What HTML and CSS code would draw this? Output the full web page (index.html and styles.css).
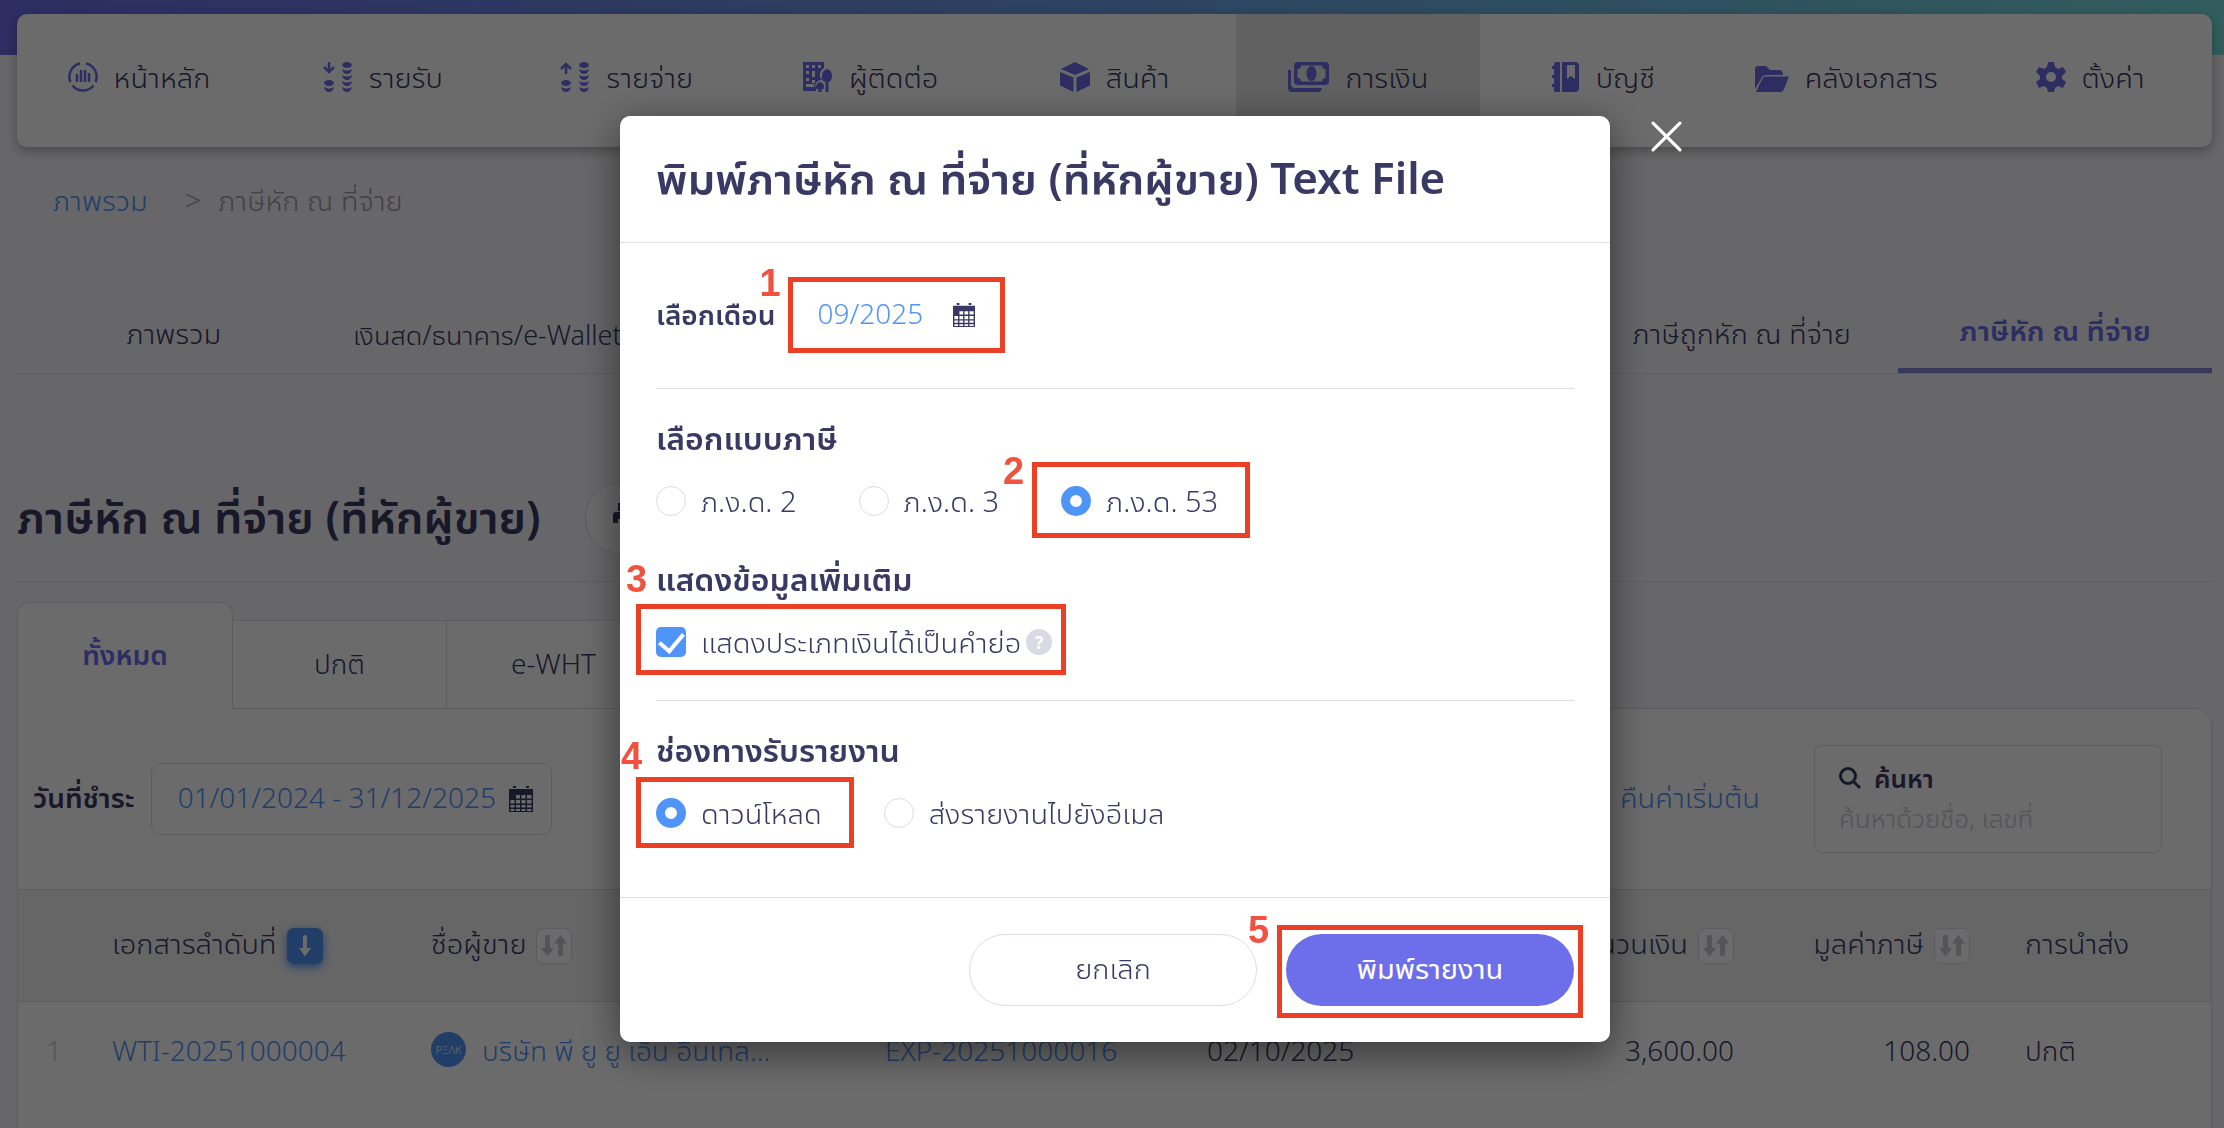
FILE: index.html
```html
<!DOCTYPE html>
<html lang="th">
<head>
  <meta charset="UTF-8">
  <meta name="viewport" content="width=device-width, initial-scale=1.0">
  <title>ภาษีหัก ณ ที่จ่าย</title>
  <link rel="stylesheet" href="styles.css">
</head>
<body>
  <svg class="defs" aria-hidden="true">
    <symbol id="calendar" viewBox="0 0 24 26">
      <path fill="currentColor" fill-rule="evenodd" d="M0 3h24v23H0zM1.500 14h4v3.500h-4zM1.500 19h4v2.500h-4zM1.500 23h4v2h-4zM7 9h4v3.500H7zM7 14h4v3.500H7zM7 19h4v2.500H7zM7 23h4v2H7zM12.500 9h4v3.500h-4zM12.500 14h4v3.500h-4zM12.500 19h4v2.500h-4zM12.500 23h4v2h-4zM18 9h4.500v3.500H18zM18 14h4.500v3.500H18zM18 19h4.500v2.500H18zM18 23h4.500v2H18z"/>
      <path fill="currentColor" d="M4 0h3v2H4zM17 0h3v2h-3z"/>
    </symbol>
    <symbol id="sort" viewBox="0 0 28 24">
      <path fill="currentColor" d="M5 2q0-1 2.500-1T10 2v12h4L7.500 22.500 1 14h4zM20.500 1l6.500 8.500h-4V21q0 1-2.500 1T18 21V9.500h-4z"/>
    </symbol>
    <symbol id="coins" viewBox="0 0 30 30">
      <path fill="currentColor" d="M19 3q1-3 5-3t5 3q-1 3-5 3t-5-3zM19 7q5 3 10 0-1 5-5 5t-5-5zM19 13q5 3 10 0-1 5-5 5t-5-5zM19 19q5 3 10 0-1 5-5 5t-5-5zM19 25q5 3 10 0-1 5-5 5t-5-5zM1 21q1-3 5-3t5 3q-1 3-5 3t-5-3zM1 25q5 3 10 0-1 5-5 5t-5-5z"/>
    </symbol>
  </svg>

  <header class="top-bar"></header>
  <div class="page">
    <nav class="main-nav">
      <a href="#" class="nav-item">
        <svg class="nav-icon" viewBox="0 0 30 30" fill="none" stroke="currentColor" stroke-width="2.500"><path d="M12 1.500A13.500 13.500 0 0 0 2.500 20M18 1.500A13.500 13.500 0 0 1 27.500 20M4.500 23.500a13.500 13.500 0 0 0 21 0M9 12v8M13 8v12M17 8v12M21 11v9"/></svg>
        <span>หน้าหลัก</span>
      </a>
      <a href="#" class="nav-item">
        <svg class="nav-icon" viewBox="0 0 30 30"><use href="#coins"/><path fill="none" stroke="currentColor" stroke-width="2.500" d="M6 0v9M1 5l5 5 5-5"/></svg>
        <span>รายรับ</span>
      </a>
      <a href="#" class="nav-item">
        <svg class="nav-icon" viewBox="0 0 30 30"><use href="#coins"/><path fill="none" stroke="currentColor" stroke-width="2.500" d="M6 12V2M1 7l5-5 5 5"/></svg>
        <span>รายจ่าย</span>
      </a>
      <a href="#" class="nav-item">
        <svg class="nav-icon" viewBox="0 0 30 30" fill="currentColor"><path fill-rule="evenodd" d="M0 0h21v6q-5 3-4 9l2 3q-5 0-7 5l1 3v3H0zM3 3v3h3V3zM9 3v3h3V3zM15 3v3h3V3zM3 9v3h3V9zM9 9v6h3V9zM3 16v3h3v-3zM9 18v3h3v-3zM3 22v3h8v-3z"/><path d="M24 7q5 1 5 7 0 5-3.500 6v10h-3V20Q18 19 19 13q1-5 5-6zM17 20q4 1 4 5 0 2-2.500 2.500V30h-3v-2.500Q12 27 13 24q1-3 4-4z"/></svg>
        <span>ผู้ติดต่อ</span>
      </a>
      <a href="#" class="nav-item">
        <svg class="nav-icon" viewBox="0 0 30 30" fill="currentColor"><path d="M15 0l14 7-14 6L1 7zM0 10l13.500 5.500V30L0 23.500zM30 10l-13.500 5.500V30L30 23.500z"/></svg>
        <span>สินค้า</span>
      </a>
      <a href="#" class="nav-item active">
        <svg class="nav-icon wide" viewBox="0 0 41 30" fill="currentColor"><path fill-rule="evenodd" d="M10 0h27q4 0 4 4v15q0 4-4 4H10q-4 0-4-4V4q0-4 4-4zM13 3.500Q13 7 9.500 7v9q3.500 0 3.500 3.500h21q0-3.500 3.500-3.500V7Q34 7 34 3.500z"/><ellipse cx="23.500" cy="11.500" rx="5" ry="7.500"/><path d="M0 8q3-1 3 1v13q0 4 4 4h27q-1 4-4 4H4q-4 0-4-4z"/></svg>
        <span>การเงิน</span>
      </a>
      <a href="#" class="nav-item">
        <svg class="nav-icon" viewBox="0 0 28 30" fill="currentColor"><path d="M3 2q0-2 3-2h3v30H6q-3 0-3-2v-3H1v-3h2v-6H1v-3h2V7H1V4h2z"/><path fill-rule="evenodd" d="M11 0h13q4 0 4 4v22q0 4-4 4H11zM16 3v14l4-3 4 3V3z"/></svg>
        <span>บัญชี</span>
      </a>
      <a href="#" class="nav-item">
        <svg class="nav-icon wide-folder" viewBox="0 0 34 30" fill="currentColor"><path d="M3 4h8l4 4h9q4 0 4 5H12q-5 0-6 4L0 27V7q0-3 3-3z"/><path d="M10 14.500h24L29 27q-1 3-4 3H1l6-13q1-2.500 3-2.500z"/></svg>
        <span>คลังเอกสาร</span>
      </a>
      <a href="#" class="nav-item">
        <svg class="nav-icon" viewBox="0 0 30 30" fill="currentColor"><path fill-rule="evenodd" d="M12 0h6l1 5 3 2 5-2 3 5-4 4v3l4 3-3 6-5-2-3 2-1 4h-6l-1-4-3-2-5 2-3-6 4-3v-3l-4-4 3-5 5 2 3-2zM15 10a5 5 0 1 0 0 10 5 5 0 0 0 0-10z"/></svg>
        <span>ตั้งค่า</span>
      </a>
    </nav>

    <div class="breadcrumb">
      <a href="#">ภาพรวม</a>
      <span class="separator">&gt;</span>
      <span>ภาษีหัก ณ ที่จ่าย</span>
    </div>

    <nav class="tabs">
      <a href="#" class="tab">ภาพรวม</a>
      <a href="#" class="tab tab-long">เงินสด/ธนาคาร/e-Wallet</a>
      <a href="#" class="tab tab-received">ภาษีถูกหัก ณ ที่จ่าย</a>
      <a href="#" class="tab active">ภาษีหัก ณ ที่จ่าย</a>
    </nav>

    <div class="title-row">
      <h1>ภาษีหัก ณ ที่จ่าย (ที่หักผู้ขาย)</h1>
      <button class="print-btn" aria-label="พิมพ์">
        <svg viewBox="0 0 28 26" fill="currentColor"><path d="M5 0h18v8H20V3H8v5H5zM3 9h22q3 0 3 3v8h-5v-4H5v4H0v-8q0-3 3-3zM7 18h14v8H7z"/></svg>
      </button>
    </div>

    <div class="sub-tabs">
      <button class="sub-tab active">ทั้งหมด</button>
      <button class="sub-tab">ปกติ</button>
      <button class="sub-tab">e-WHT</button>
    </div>

    <section class="panel">
      <div class="filters">
        <label for="paid-date">วันที่ชำระ</label>
        <div class="date-box">
          <input id="paid-date" type="text" value="01/01/2024 - 31/12/2025">
          <svg class="calendar"><use href="#calendar"/></svg>
        </div>
        <a href="#" class="reset">คืนค่าเริ่มต้น</a>
        <div class="search-box">
          <label for="search">
            <svg viewBox="0 0 22 22" fill="none" stroke="currentColor" stroke-width="3"><circle cx="9" cy="9" r="7.500"/><path d="M14 14l7 7"/></svg>
            ค้นหา
          </label>
          <input id="search" type="text" placeholder="ค้นหาด้วยชื่อ, เลขที่">
        </div>
      </div>

      <table>
        <colgroup>
          <col class="col-no"><col class="col-doc"><col class="col-vendor"><col class="col-ref"><col class="col-date"><col class="col-amount"><col class="col-tax"><col class="col-status">
        </colgroup>
        <thead>
          <tr>
            <th></th>
            <th><span class="th"><span>เอกสารลำดับที่</span> <button class="sort on" aria-label="เรียงลำดับ"><svg viewBox="0 0 14 24"><path fill="currentColor" d="M7 1q2 0 2 2v11h4L7 22.500 1 14h4V3q0-2 2-2z"/></svg></button></span></th>
            <th><span class="th"><span>ชื่อผู้ขาย</span> <button class="sort" aria-label="เรียงลำดับ"><svg><use href="#sort"/></svg></button></span></th>
            <th></th>
            <th></th>
            <th class="num"><span class="th"><span>จำนวนเงิน</span> <button class="sort" aria-label="เรียงลำดับ"><svg><use href="#sort"/></svg></button></span></th>
            <th class="num"><span class="th"><span>มูลค่าภาษี</span> <button class="sort" aria-label="เรียงลำดับ"><svg><use href="#sort"/></svg></button></span></th>
            <th class="status"><span class="th"><span>การนำส่ง</span></span></th>
          </tr>
        </thead>
        <tbody>
          <tr>
            <td class="row-no">1</td>
            <td><a href="#">WTI-20251000004</a></td>
            <td><a href="#" class="vendor"><span class="logo">PΞΛK</span>บริษัท พี ยู ยู เอ็น อินเทล...</a></td>
            <td><a href="#">EXP-20251000016</a></td>
            <td>02/10/2025</td>
            <td class="num">3,600.00</td>
            <td class="num">108.00</td>
            <td class="status">ปกติ</td>
          </tr>
        </tbody>
      </table>
    </section>
  </div>

  <div class="overlay">
    <div class="modal" role="dialog" aria-labelledby="modal-title">
      <button class="close" aria-label="ปิด">
        <svg viewBox="0 0 30 30" fill="none" stroke="currentColor" stroke-width="3" stroke-linecap="round"><path d="M2 2l26 26M28 2L2 28"/></svg>
      </button>
      <div class="modal-header">
        <h2 id="modal-title">พิมพ์ภาษีหัก ณ ที่จ่าย (ที่หักผู้ขาย) Text File</h2>
      </div>

      <div class="modal-body">
        <div class="month-row">
          <label for="month">เลือกเดือน</label>
          <div class="month-box">
            <input id="month" type="text" value="09/2025">
            <svg class="calendar small"><use href="#calendar"/></svg>
            <span class="mark mark-month"></span>
            <b class="step step-1">1</b>
          </div>
        </div>

        <fieldset>
          <legend>เลือกแบบภาษี</legend>
          <div class="options">
            <label class="option"><input type="radio" name="form"><span>ภ.ง.ด. 2</span></label>
            <label class="option"><input type="radio" name="form"><span>ภ.ง.ด. 3</span></label>
            <label class="option"><input type="radio" name="form" checked><span>ภ.ง.ด. 53</span><i class="mark mark-form"></i><b class="step step-2">2</b></label>
          </div>
        </fieldset>

        <fieldset class="extra">
          <legend>แสดงข้อมูลเพิ่มเติม</legend>
          <div class="options">
            <label class="option"><input type="checkbox" checked><span>แสดงประเภทเงินได้เป็นคำย่อ</span><span class="help">?</span><i class="mark mark-extra"></i><b class="step step-3">3</b></label>
          </div>
        </fieldset>

        <fieldset>
          <legend>ช่องทางรับรายงาน</legend>
          <div class="options">
            <label class="option"><input type="radio" name="channel" checked><span>ดาวน์โหลด</span><i class="mark mark-channel"></i><b class="step step-4">4</b></label>
            <label class="option"><input type="radio" name="channel"><span>ส่งรายงานไปยังอีเมล</span></label>
          </div>
        </fieldset>
      </div>

      <div class="modal-footer">
        <button class="btn">ยกเลิก</button>
        <div class="submit">
          <button class="btn primary">พิมพ์รายงาน</button>
          <span class="mark mark-submit"></span>
          <b class="step step-5">5</b>
        </div>
      </div>
    </div>
  </div>
</body>
</html>
```
FILE: styles.css
```css
* {
  box-sizing: border-box;
}

body {
  display: flex;
  flex-direction: column;
  margin: 0;
  min-height: 100vh;
  background-color: #f5f5f9;
  color: #3a3963;
  font-family: 'Noto Sans', 'Noto Sans Thai UI', 'Noto Sans Thai', sans-serif;
  font-size: 28px;
  font-weight: 350;
  line-height: 40px;
}

a {
  color: #4f94f8;
  text-decoration: none;
}

button,
input {
  font: inherit;
  color: inherit;
}

button {
  padding: 0;
  cursor: pointer;
}

input[type="text"] {
  min-width: 0;
  padding: 0 0 4px;
  border: 0;
  outline: 0;
  background: none;
}

.defs {
  position: absolute;
  width: 0;
  height: 0;
}

.top-bar {
  height: 55px;
  background: linear-gradient(90deg, #6b6de8, #6ba0e8 50%, #76dede);
}

.page {
  flex: 1;
  display: flex;
  flex-direction: column;
  margin: -41px 12px 0 17px;
}

/* main menu */
.main-nav {
  display: grid;
  grid-template-columns: repeat(9, 1fr);
  height: 133px;
  overflow: hidden;
  border-radius: 10px;
  background-color: #fff;
  box-shadow: 0 4px 12px rgba(0, 0, 0, 0.3);
  font-size: 29px;
}

.nav-item {
  display: flex;
  justify-content: center;
  gap: 16px;
  padding-top: 43px;
  color: #3a3963;
  white-space: nowrap;
}

.nav-item.active {
  background-color: #e6e6e6;
}

.nav-icon {
  width: 30px;
  height: 30px;
  margin-top: 5px;
  color: #6b6de8;
}

.nav-icon.wide {
  width: 41px;
}

.nav-icon.wide-folder {
  width: 34px;
}

.breadcrumb {
  display: flex;
  gap: 17px;
  margin-top: 33px;
  padding-left: 36px;
  color: #9e9ea8;
  font-size: 29px;
}

.separator {
  margin-left: 20px;
}

.tabs {
  display: grid;
  grid-template-columns: repeat(7, 1fr);
  height: 84px;
  margin-top: 70px;
  border-bottom: 1px solid #dcdce4;
  font-size: 29px;
}

.tab {
  padding-top: 23px;
  color: #3a3963;
  text-align: center;
  white-space: nowrap;
}

.tab-long {
  font-size: 27px;
  line-height: 44px;
}

.tab-received {
  grid-column: 6;
}

.tab.active {
  padding-top: 20px;
  border-bottom: 5px solid #8585dc;
  color: #6b6de8;
  font-weight: 600;
}

.title-row {
  display: flex;
  align-items: center;
  gap: 44px;
  height: 208px;
  padding-top: 80px;
  border-bottom: 1px solid #dcdce4;
}

h1,
h2 {
  margin: 0;
  padding-bottom: 4px;
  font-size: 44px;
  font-weight: 600;
  line-height: 60px;
  white-space: nowrap;
}

h1 {
  font-size: 45px;
}

.print-btn {
  width: 84px;
  height: 72px;
  border: 1px solid #dcdce4;
  border-radius: 36px;
  background-color: #fff;
}

.print-btn svg {
  width: 28px;
  height: 26px;
}

.sub-tabs {
  display: flex;
  align-items: flex-end;
  margin-top: 20px;
}

.sub-tab {
  width: 214px;
  height: 88px;
  padding-bottom: 4px;
  border: 1px solid #dcdce4;
  border-width: 1px 1px 0 0;
  background-color: #fff;
}

.sub-tab.active {
  position: relative;
  width: 216px;
  height: 107px;
  margin-bottom: -1px;
  border-width: 1px 1px 0;
  border-radius: 12px 12px 0 0;
  color: #6b6de8;
  font-weight: 600;
}

/* list of documents */
.panel {
  flex: 1;
  border: 1px solid #dcdce4;
  border-bottom: 0;
  border-top-right-radius: 16px;
  background-color: #fff;
}

.filters {
  display: flex;
  align-items: center;
  height: 180px;
  padding: 0 49px 0 15px;
}

.filters label {
  padding-bottom: 4px;
  font-weight: 600;
  white-space: nowrap;
}

.date-box {
  display: flex;
  align-items: center;
  width: 401px;
  height: 72px;
  margin-left: 16px;
  padding: 0 18px 0 26px;
  border: 1px solid #dcdce4;
  border-radius: 10px;
  color: #4f94f8;
}

.date-box input {
  flex: 1;
}

.calendar {
  width: 24px;
  height: 26px;
  color: #3a3963;
}

.calendar.small {
  width: 22px;
  height: 24px;
}

.reset {
  margin-left: auto;
  padding-bottom: 4px;
  font-size: 29px;
  white-space: nowrap;
}

.search-box {
  width: 348px;
  height: 108px;
  margin-left: 54px;
  padding: 12px 24px;
  border: 1px solid #dcdce4;
  border-radius: 8px;
  font-size: 26px;
}

.search-box label {
  display: flex;
  align-items: center;
  gap: 13px;
  padding-bottom: 0;
}

.search-box svg {
  width: 22px;
  height: 22px;
}

.search-box input {
  width: 100%;
}

.search-box input::placeholder {
  color: #c8c8d2;
}

table {
  width: 100%;
  border-collapse: collapse;
  table-layout: fixed;
}

.col-no { width: 94px; }
.col-doc { width: 319px; }
.col-vendor { width: 454px; }
.col-ref { width: 322px; }
.col-date { width: 233px; }
.col-amount { width: 294px; }
.col-tax { width: 236px; }
.col-status { width: 241px; }

th,
td {
  padding: 0;
  font-weight: 350;
  text-align: left;
  white-space: nowrap;
}

th {
  height: 112px;
  border: 1px solid #dcdce4;
  border-width: 1px 0;
  background-color: #f2f2f2;
  font-size: 29px;
}

td {
  height: 98px;
  padding-bottom: 2px;
}

.th {
  display: inline-flex;
  align-items: center;
  gap: 10px;
}

.th span {
  padding-bottom: 6px;
}

.num {
  text-align: right;
}

.status {
  padding-left: 55px;
}

.row-no {
  padding-left: 28px;
  color: #c8c8d2;
}

.sort {
  display: grid;
  place-items: center;
  width: 36px;
  height: 36px;
  border: 1px solid #dcdce4;
  border-radius: 7px;
  background-color: #fff;
  color: #c8c8d2;
}

.sort.on {
  border: 0;
  background-color: #4f94f8;
  box-shadow: 0 3px 8px #4f94f8;
  color: #fff;
}

.sort svg {
  width: 28px;
  height: 24px;
}

.vendor {
  display: flex;
  align-items: center;
  gap: 16px;
}

.logo {
  display: grid;
  place-items: center;
  width: 35px;
  height: 35px;
  border-radius: 50%;
  background-color: #4f94f8;
  color: #fff;
  font-size: 11px;
  line-height: 11px;
}

/* print dialog */
.overlay {
  position: fixed;
  inset: 0;
  display: flex;
  justify-content: center;
  align-items: flex-start;
  padding: 116px 0 0 6px;
  background-color: rgba(0, 0, 0, 0.58);
}

.modal {
  position: relative;
  width: 990px;
  max-width: 90%;
  border-radius: 10px;
  background-color: #fff;
  box-shadow: 0 10px 40px rgba(0, 0, 0, 0.5);
}

.close {
  position: absolute;
  top: 5px;
  right: -72px;
  border: 0;
  background: none;
  color: #fff;
}

.close svg {
  display: block;
  width: 31px;
  height: 31px;
}

.modal-header {
  padding: 31px 36px;
  border-bottom: 1px solid #dcdce4;
}

.modal-body {
  padding: 0 36px 64px;
}

.month-row {
  display: flex;
  align-items: center;
  gap: 12px;
  height: 146px;
  border-bottom: 1px solid #dcdce4;
}

.month-row label {
  padding-bottom: 4px;
  font-weight: 600;
  white-space: nowrap;
}

.month-box {
  position: relative;
  display: flex;
  align-items: center;
  width: 217px;
  height: 76px;
  margin-bottom: 2px;
  padding: 0 30px;
  color: #4f94f8;
}

.month-box input {
  flex: 1;
}

fieldset {
  margin: 0;
  padding: 0;
  border: 0;
}

legend {
  padding: 29px 0 1px;
  font-size: 32px;
  font-weight: 600;
}

.options {
  display: flex;
  gap: 62px;
  padding-top: 22px;
  font-size: 29px;
}

.extra {
  padding-bottom: 38px;
  border-bottom: 1px solid #dcdce4;
}

.extra legend {
  padding-top: 38px;
}

.option {
  position: relative;
  display: flex;
  align-items: center;
  gap: 15px;
  white-space: nowrap;
}

.option input {
  appearance: none;
  width: 30px;
  height: 30px;
  margin: 0;
  border: 1px solid #dcdce4;
  border-radius: 50%;
  background-color: #fff;
}

.option input[type="radio"]:checked {
  border: 9px solid #4f94f8;
}

.option input[type="checkbox"] {
  display: grid;
  place-items: center;
  border: 0;
  border-radius: 5px;
  background-color: #4f94f8;
}

.option input[type="checkbox"]::after {
  content: '';
  width: 11px;
  height: 20px;
  margin-top: -4px;
  border: solid #fff;
  border-width: 0 4px 4px 0;
  transform: rotate(40deg);
}

.help {
  width: 26px;
  height: 26px;
  margin-left: -10px;
  border-radius: 50%;
  background-color: #dadae5;
  color: #fff;
  font-size: 18px;
  font-weight: 700;
  line-height: 26px;
  text-align: center;
}

.modal-footer {
  display: flex;
  justify-content: flex-end;
  gap: 29px;
  padding: 36px;
  border-top: 1px solid #dcdce4;
}

.btn {
  display: block;
  width: 288px;
  height: 72px;
  padding-bottom: 4px;
  border: 1px solid #dcdce4;
  border-radius: 36px;
  background-color: #fff;
  font-size: 29px;
}

.btn.primary {
  border: 0;
  background-color: #6c6eea;
  color: #fff;
  font-weight: 400;
}

.submit {
  position: relative;
}

/* numbered steps drawn over the form */
.mark {
  position: absolute;
  border: 5px solid #eb4025;
  pointer-events: none;
}

.mark-month { inset: 0; }
.mark-form { inset: -19px -32px -17px -29px; }
.mark-extra { inset: -18px -14px -13px -20px; }
.mark-channel { inset: -16px -32px -15px -20px; }
.mark-submit { inset: -9px -9px -12px; }

.step {
  position: absolute;
  color: #f0523f;
  font-family: 'Liberation Sans', sans-serif;
  font-size: 38px;
  font-weight: 700;
  line-height: 28px;
}

.step-1 { top: -8px; left: -28px; }
.step-2 { top: -24px; left: -58px; }
.step-3 { top: -57px; left: -30px; }
.step-4 { top: -51px; left: -35px; }
.step-5 { top: -18px; left: -38px; }
```
